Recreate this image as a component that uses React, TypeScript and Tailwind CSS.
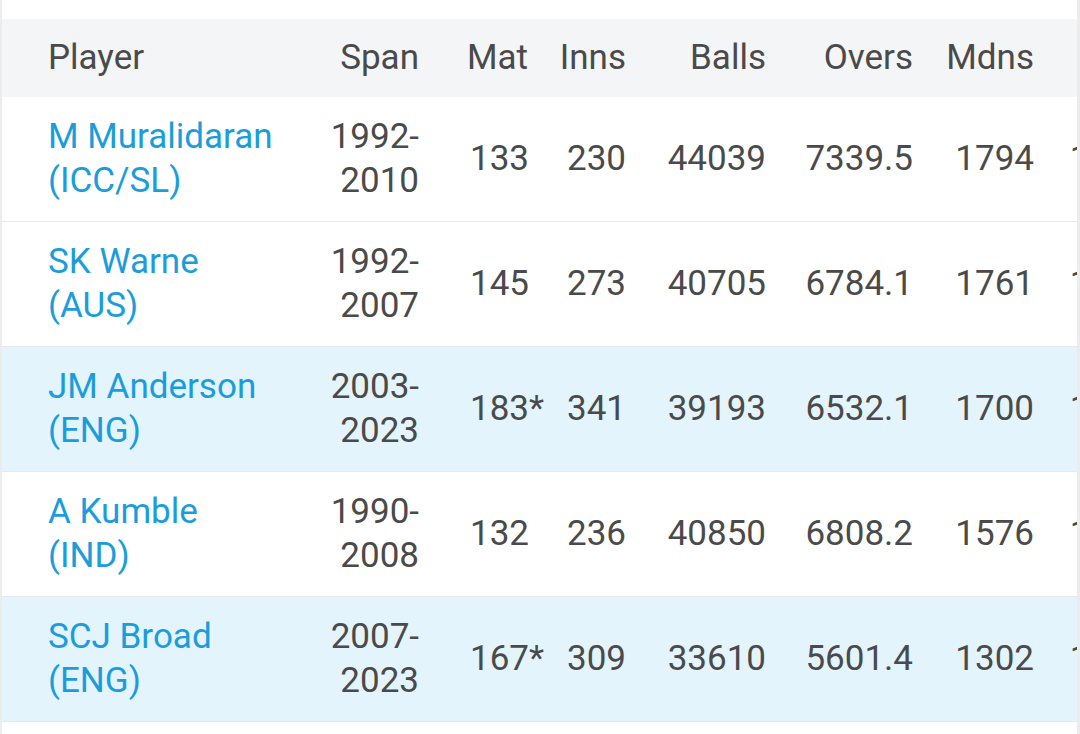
const rows = [
  { name: "M Muralidaran", team: "(ICC/SL)", from: "1992-", to: "2010", mat: "133", inns: "230", balls: "44039", overs: "7339.5", mdns: "1794", runs: "18180", hl: false },
  { name: "SK Warne", team: "(AUS)", from: "1992-", to: "2007", mat: "145", inns: "273", balls: "40705", overs: "6784.1", mdns: "1761", runs: "17995", hl: false },
  { name: "JM Anderson", team: "(ENG)", from: "2003-", to: "2023", mat: "183*", inns: "341", balls: "39193", overs: "6532.1", mdns: "1700", runs: "18627", hl: true },
  { name: "A Kumble", team: "(IND)", from: "1990-", to: "2008", mat: "132", inns: "236", balls: "40850", overs: "6808.2", mdns: "1576", runs: "18355", hl: false },
  { name: "SCJ Broad", team: "(ENG)", from: "2007-", to: "2023", mat: "167*", inns: "309", balls: "33610", overs: "5601.4", mdns: "1302", runs: "16719", hl: true },
];

const font = { fontFamily: "Roboto, 'Noto Sans', sans-serif" };

export default function App() {
  return (
    <div className="h-[734px] w-[1080px] bg-white border-l-2 border-r-[3px] border-[#ececec] overflow-hidden" style={font}>
      <div className="pt-[19px] overflow-hidden text-[35px] leading-[44px] text-[#4a4a4a]">
        <div className="w-[1300px]">
          <div className="flex h-[78px] items-center pb-[1px] bg-[#f4f5f7]">
            <div className="w-[298px] shrink-0 pl-[46px]">Player</div>
            <div className="w-[135px] shrink-0 pr-4 text-right">Span</div>
            <div className="w-[110px] shrink-0 pl-[32px]">Mat</div>
            <div className="w-[97px] shrink-0 pr-4 text-right">Inns</div>
            <div className="w-[140px] shrink-0 pr-4 text-right">Balls</div>
            <div className="w-[147px] shrink-0 pr-4 text-right">Overs</div>
            <div className="w-[121px] shrink-0 pr-4 text-right">Mdns</div>
            <div className="w-[134px] shrink-0 pr-4 text-right">Runs</div>
          </div>
          {rows.map((r) => (
            <div
              key={r.name}
              className={`flex h-[125px] items-center pb-[1px] border-b border-[#e8e9eb] ${r.hl ? "bg-[#e3f4fd]" : "bg-white"}`}
            >
              <div className="w-[298px] shrink-0 pl-[46px] text-[#1b9ddb]">
                <div>{r.name}</div>
                <div>{r.team}</div>
              </div>
              <div className="w-[135px] shrink-0 pr-4 text-right">
                <div>{r.from}</div>
                <div>{r.to}</div>
              </div>
              <div className="w-[110px] shrink-0 pl-[35px]">{r.mat}</div>
              <div className="w-[97px] shrink-0 pr-4 text-right">{r.inns}</div>
              <div className="w-[140px] shrink-0 pr-4 text-right">{r.balls}</div>
              <div className="w-[147px] shrink-0 pr-4 text-right">{r.overs}</div>
              <div className="w-[121px] shrink-0 pr-4 text-right">{r.mdns}</div>
              <div className="w-[134px] shrink-0 pr-4 text-right">{r.runs}</div>
            </div>
          ))}
        </div>
      </div>
    </div>
  );
}
